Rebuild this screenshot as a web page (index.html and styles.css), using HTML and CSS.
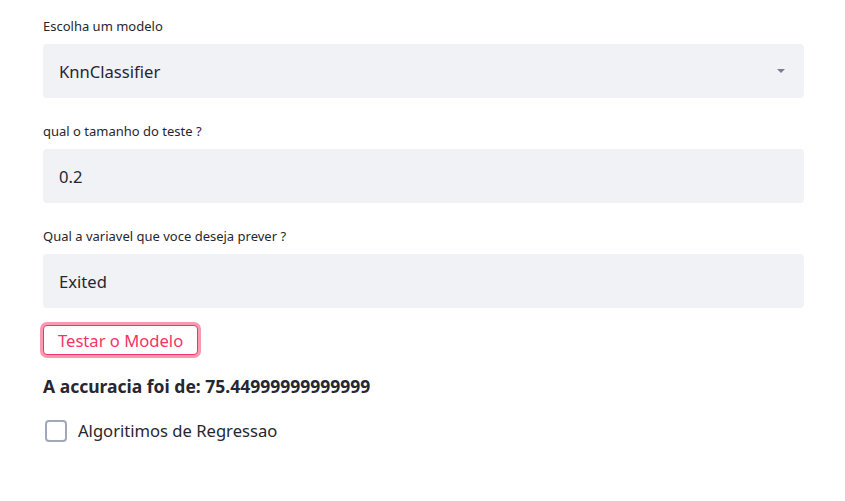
FILE: index.html
```html
<!DOCTYPE html>
<html>
<head>
<meta charset="utf-8">
<link rel="stylesheet" href="styles.css">
</head>
<body>
<main class="main">
  <div class="field first">
    <label class="label">Escolha um modelo</label>
    <div class="box select">
      <span class="value">KnnClassifier</span>
      <svg class="caret" width="10" height="6" viewBox="0 0 10 6"><path d="M1 1h8L5 5z" fill="#7b7e8f"/></svg>
    </div>
  </div>
  <div class="field">
    <label class="label">qual o tamanho do teste ?</label>
    <div class="box"><span class="value">0.2</span></div>
  </div>
  <div class="field last">
    <label class="label">Qual a variavel que voce deseja prever ?</label>
    <div class="box"><span class="value">Exited</span></div>
  </div>
  <button class="btn">Testar o Modelo</button>
  <p class="result">A accuracia foi de: 75.44999999999999</p>
  <label class="check"><span class="checkbox"></span><span class="check-label">Algoritimos de Regressao</span></label>
</main>
</body>
</html>
```
FILE: styles.css
```css
html, body {
  margin: 0;
  padding: 0;
  background: #ffffff;
}
body {
  font-family: "Noto Sans", "Open Sans", sans-serif;
  color: rgb(38, 39, 48);
}
.main {
  width: 761px;
  margin-left: 43px;
  padding-top: 15px;
  display: flex;
  flex-direction: column;
  align-items: flex-start;
}
.field {
  width: 100%;
  margin-bottom: 22px;
}
.field.last {
  margin-bottom: 17px;
}
.label {
  display: block;
  font-size: 13px;
  line-height: 22px;
  height: 22px;
  margin-bottom: 7px;
  color: rgb(38, 39, 48);
}
.box {
  height: 54px;
  background: rgb(240, 242, 246);
  border-radius: 4px;
  display: flex;
  align-items: center;
  padding: 0 16px;
  box-sizing: border-box;
}
.select {
  justify-content: space-between;
}
.caret {
  margin-right: 2px;
}
.value {
  font-size: 16.6px;
  color: rgb(38, 39, 48);
}
.btn {
  height: 30px;
  padding: 0 14px;
  font-family: inherit;
  font-size: 16.6px;
  color: rgb(246, 51, 102);
  background: #fff;
  border: 1px solid rgb(246, 51, 102);
  border-radius: 4px;
  box-shadow: 0 0 0 3px rgba(246, 51, 102, 0.5);
  cursor: pointer;
}
.result {
  margin: 20px 0 0 0;
  font-size: 17.5px;
  font-weight: 700;
  line-height: 22px;
}
.check {
  display: flex;
  align-items: center;
  margin-top: 22px;
  margin-left: 2px;
}
.checkbox {
  width: 18px;
  height: 18px;
  border: 2px solid rgb(163, 168, 184);
  border-radius: 4px;
  box-sizing: content-box;
}
.check-label {
  margin-left: 11px;
  font-size: 16.6px;
}
```
